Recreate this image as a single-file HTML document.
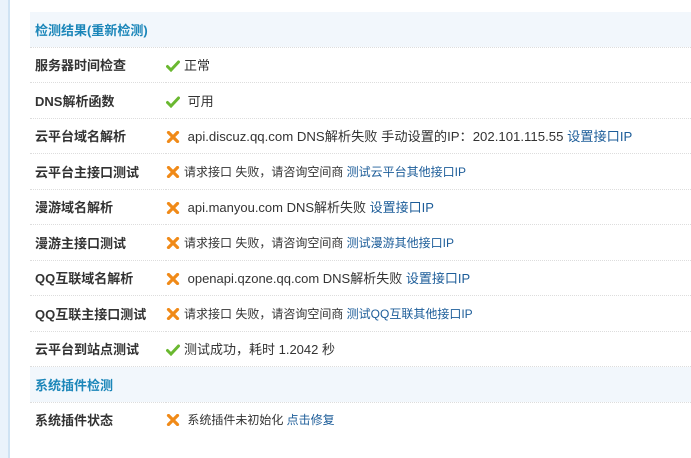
<!DOCTYPE html>
<html><head><meta charset="utf-8"><style>
body{margin:0;width:691px;height:458px;background:#fff;font-family:"Liberation Sans","Noto Sans CJK SC",sans-serif;font-size:13px;color:#333;position:relative;overflow:hidden}
.side{position:absolute;left:0;top:0;width:8px;height:458px;background:#eaf3fb;border-right:2px solid #cfe3f3}
table{position:absolute;left:30px;top:12px;width:661px;border-collapse:collapse}
td{height:34.5px;border-bottom:1px dotted #ddd;padding:0;vertical-align:middle}
td.l{width:131px;padding-left:5px;font-weight:bold;color:#333}
td.s{font-size:12px}
tr.h td{background:#f2f7fc;color:#1b86b9;font-weight:bold;padding-left:5px}
a{color:#1d5d99;text-decoration:none}
.ok,.no{display:inline-block;width:14px;margin-right:4px;vertical-align:-2px}
</style></head><body>
<div class="side"></div>
<svg width="0" height="0" style="position:absolute"><defs>
<symbol id="ok" viewBox="0 0 14 12"><path d="M1.5 6.5L5 10L12.5 2" fill="none" stroke="#6ab830" stroke-width="3" stroke-linecap="round"/></symbol>
<symbol id="no" viewBox="0 0 14 12"><path d="M2.5 1.5L11.5 10.5M11.5 1.5L2.5 10.5" fill="none" stroke="#f08a18" stroke-width="3.2" stroke-linecap="round"/></symbol>
</defs></svg>
<table>
<tr class="h"><td colspan="2">检测结果(重新检测)</td></tr>
<tr><td class="l">服务器时间检查</td><td><svg class="ok" height="12"><use href="#ok"/></svg>正常</td></tr>
<tr><td class="l">DNS解析函数</td><td><svg class="ok" height="12"><use href="#ok"/></svg> 可用</td></tr>
<tr><td class="l">云平台域名解析</td><td style="font-size:13.2px"><svg class="no" height="12"><use href="#no"/></svg> api.discuz.qq.com DNS解析失败 手动设置的IP：202.101.115.55 <a>设置接口IP</a></td></tr>
<tr><td class="l">云平台主接口测试</td><td class="s"><svg class="no" height="12"><use href="#no"/></svg>请求接口 失败，请咨询空间商 <a>测试云平台其他接口IP</a></td></tr>
<tr><td class="l">漫游域名解析</td><td><svg class="no" height="12"><use href="#no"/></svg> api.manyou.com DNS解析失败 <a>设置接口IP</a></td></tr>
<tr><td class="l">漫游主接口测试</td><td class="s"><svg class="no" height="12"><use href="#no"/></svg>请求接口 失败，请咨询空间商 <a>测试漫游其他接口IP</a></td></tr>
<tr><td class="l">QQ互联域名解析</td><td><svg class="no" height="12"><use href="#no"/></svg> openapi.qzone.qq.com DNS解析失败 <a>设置接口IP</a></td></tr>
<tr><td class="l">QQ互联主接口测试</td><td class="s"><svg class="no" height="12"><use href="#no"/></svg>请求接口 失败，请咨询空间商 <a>测试QQ互联其他接口IP</a></td></tr>
<tr><td class="l">云平台到站点测试</td><td><svg class="ok" height="12"><use href="#ok"/></svg>测试成功，耗时 1.2042 秒</td></tr>
<tr class="h"><td colspan="2">系统插件检测</td></tr>
<tr><td class="l" style="border:0">系统插件状态</td><td class="s" style="border:0"><svg class="no" height="12"><use href="#no"/></svg> 系统插件未初始化 <a>点击修复</a></td></tr>
</table>
</body></html>
